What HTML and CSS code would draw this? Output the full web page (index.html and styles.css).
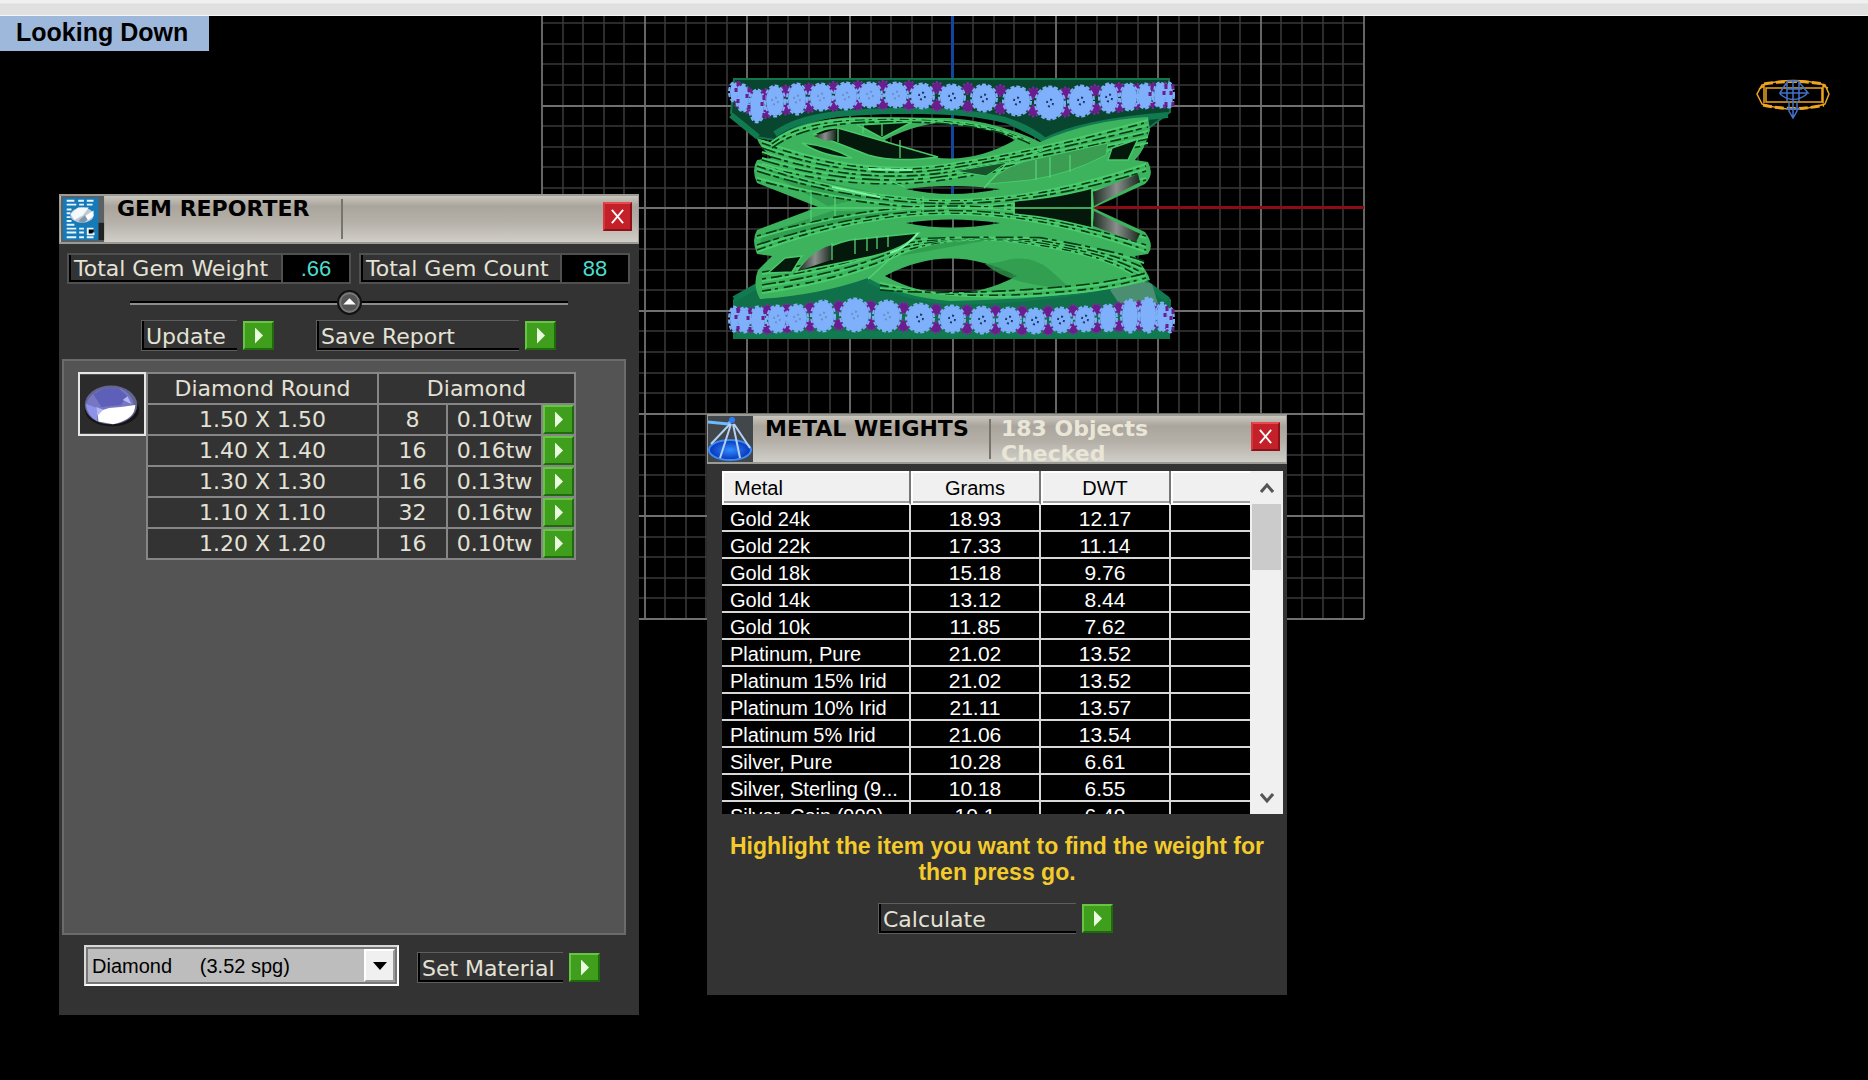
FILE: index.html
```html
<!DOCTYPE html>
<html lang="en">
<head>
<meta charset="utf-8">
<title>Looking Down</title>
<link rel="stylesheet" href="styles.css">
</head>
<body>
<svg class="scene" id="scene" aria-hidden="true">
  <g id="grid"></g>
  <g id="ring">
    <g fill="#08462f" stroke="#14764f" stroke-width="2">
      <path d="M734 79H1169L1170 112L1150 127L1045 141L1000 119Q950 110 850 114Q800 120 775 140L756 137L731 113Z"/>
      <path d="M734 338H1169L1170 300L1140 276Q1060 300 950 303Q900 292 866 276Q820 296 756 288L734 300Z" fill="#0f704a"/>
    </g>
    <path fill="none" stroke="#117a50" stroke-width="6" d="M731 115L758 137M775 134Q800 116 850 113Q950 106 1005 120Q1030 128 1045 141Q1080 122 1168 115M734 299L757 286M868 280Q910 300 960 302Q1060 300 1140 279L1168 300M736 334H1168"/>
    <path fill="#4a8f72" d="M1110 290L1130 277L1152 284L1158 304L1120 305Z"/>
    <path id="metal" fill="#3db35d" fill-rule="evenodd" d="M770 142Q800 118 860 117L950 118Q1000 122 1040 142Q1090 120 1148 117L1150 130Q1145 150 1135 160L1148 162Q1155 175 1145 184L1093 208L1145 232Q1155 245 1148 254L1135 256Q1148 272 1150 280Q1080 299 950 301Q900 297 868 278Q820 295 760 299Q752 285 758 270L772 256L757 254Q751 240 757 230L818 207L757 183Q751 170 757 160L772 158Q758 145 757 138Z
      M885 140Q950 105 1015 140Q950 177 885 140Z M906 189Q950 183 1000 189Q950 199 906 189Z M906 223Q950 216 1000 223Q950 232 906 223Z M885 276Q950 241 1017 276Q950 311 885 276Z"/>
    <g fill="#2f9a4e" opacity=".8">
      <path d="M760 168L880 194L828 206Z"/>
      <path d="M760 244L762 234L832 211L900 212Q820 226 760 244Z"/>
      <path d="M1000 262Q1030 252 1050 270L1070 288Q1010 286 985 264Z"/>
      <path d="M915 246Q930 234 1000 238L900 256Z"/>
    </g>
    <g id="contours" fill="none"></g>
    <g fill="#04180c" stroke="#48c96a" stroke-width="1.5">
      <path d="M814 134Q826 127 838 128L938 157Q895 163 868 155Z"/>
      <path d="M858 125L912 122L882 138Z"/>
      <path d="M1014 201Q1060 197 1092 188V228Q1050 217 1014 214Z"/>
      <path d="M796 272Q814 248 850 240L918 233Q905 250 864 258Z"/>
      <path d="M802 143Q830 146 852 158Q824 157 802 143Z"/>
      <path d="M1112 148L1138 139L1128 160L1108 160Z"/>
      <path d="M768 273L785 258L802 256L792 272Z"/>
    </g>
    <path fill="#3a9d52" stroke="#48c96a" d="M988 184Q1004 164 1040 158L1108 143L1106 155Q1070 174 1030 180Z"/>
    <path fill="#17532b" stroke="#48c96a" d="M955 171L1008 162L986 176Z"/>
    <g fill="url(#steel)">
      <path d="M814 136L836 129V140L826 141Z"/>
      <path d="M798 271Q812 250 832 245L831 260Z"/>
      <path d="M1093 192L1138 174L1140 182L1094 206Z"/>
      <path d="M1094 211L1140 234L1136 242L1093 226Z"/>
    </g>
    <path d="M890 181L905 187M984 188L1006 164L1050 148M868 279L920 232M1014 203V214M1014 208H1093M1092 190V226M810 208H1090M838 128V142M882 124V136M863 124V133M900 140V158M832 243V260M855 238V254M867 237V251M877 236V249M888 235V247M1050 157V178M1070 155V172M1036 160V180M811 190V222M835 196V216M923 196V214" fill="none" stroke="#55d276" stroke-width="1.3"/>
    <path d="M868 169L912 170M832 187L880 197M890 253Q906 248 918 233" fill="none" stroke="#7df5a5" stroke-width="2"/>
    <g id="gems"></g>
  </g>
  <g class="mini" fill="none" stroke-width="1.5" id="mini">
    <path stroke="#efa51f" d="M1762 85Q1793 76 1825 85L1829 94L1825 104Q1793 114 1762 104L1757 94ZM1766 88H1822V102H1766ZM1759 89L1764 86V103M1828 88L1823 86V103"/>
    <path stroke="#efa51f" stroke-width="3" stroke-dasharray="9 3" d="M1764 84Q1793 79 1824 84M1763 105Q1793 112 1824 105"/>
    <path stroke="#4372c8" d="M1783 88L1788 81H1798L1804 88L1808 93H1780ZM1780 94Q1793 105 1807 94M1787 82V101M1793 80V118M1799 82V101M1786 89H1802M1789 101V111L1793 118L1797 111V101M1786 109H1800"/>
  </g>
  <defs>
    <linearGradient id="steel"><stop offset="0" stop-color="#1c2a20"/><stop offset=".5" stop-color="#8a8f8b"/><stop offset="1" stop-color="#1a281f"/></linearGradient>
  </defs>
</svg>

<header class="toolbar"></header>
<h1 class="view-name">Looking Down</h1>

<section class="window gem" aria-label="Gem Reporter">
  <div class="titlebar">
    <svg class="app-icon" viewBox="0 0 45 48" aria-hidden="true">
      <rect width="45" height="48" fill="#5a6063"/><path d="M39 28h6v18h-6z" fill="#222"/>
      <rect x="2" y="2" width="37" height="44" fill="#167ab8"/>
      <path stroke="#eaf6ff" stroke-width="2" d="M6 5h8M18 5h6M27 5h7M6 9h10M19 9h5M27 9h6M6 14h5M6 18h4M6 22h4M6 26h5M6 30h8M6 34h10M19 34h5M34 34h-6v6h6v-2M6 38h10M19 38h5M6 43h10M19 43h5M27 43h7"/>
      <ellipse cx="22" cy="20" rx="12" ry="8" fill="#bccbd6"/><path d="M10 19l8-7 11 0-6 8-9 5z" fill="#f6f9fb"/><path d="M24 22l10-7v6l-7 5z" fill="#fff"/><path d="M18 26l7-6 3 5-5 3z" fill="#7f98aa"/>
    </svg>
    <h2 class="title">GEM REPORTER</h2>
    <p class="status"></p>
    <button class="close" aria-label="Close"><svg viewBox="0 0 16 16"><path d="M2 1L14 15M14 1L2 15"/></svg></button>
  </div>
  <div class="totals">
    <div class="total weight"><span class="total-name">Total Gem Weight</span><output>.66</output></div>
    <div class="total count"><span class="total-name">Total Gem Count</span><output>88</output></div>
  </div>
  <div class="divider"><button class="knob" aria-label="Collapse"><svg viewBox="0 0 24 24"><circle cx="12" cy="12" r="11" fill="#777" stroke="#111" stroke-width="2"/><circle cx="12" cy="12" r="8" fill="#555"/><path d="M6 14L12 8L18 14Z" fill="#fff"/></svg></button></div>
  <div class="actions">
    <div class="action update"><label for="update">Update</label><button class="go" id="update"></button></div>
    <div class="action save"><label for="save">Save Report</label><button class="go" id="save"></button></div>
  </div>
  <div class="report">
    <svg class="thumb" viewBox="0 0 66 60" aria-label="Round gem">
      <rect width="66" height="60" fill="#2b2b2b"/>
      <ellipse cx="33" cy="36" rx="28" ry="17" fill="#151515"/>
      <ellipse cx="32" cy="31" rx="27" ry="20" fill="#65668f"/>
      <path d="M6 32Q8 20 24 14H42Q54 20 56 32L44 40H12Z" fill="#7577c4"/>
      <path d="M14 20L24 14H40L49 22L42 31L22 33Z" fill="#5d5fb8"/><path d="M6 30L18 34V48Q7 42 6 30Z" fill="#8e92ea"/>
      <path d="M18 38L30 34L42 33L57 31Q57 46 34 51L19 48Z" fill="#fff"/><path d="M17 33l7 3-6 6zM44 26l5-4 4 8z" fill="#b4b6f5"/>
    </svg>
    <table class="stones">
      <colgroup><col class="c-size"><col class="c-qty"><col class="c-wt"><col class="c-go"></colgroup>
      <thead><tr><th>Diamond Round</th><th colspan="3">Diamond</th></tr></thead>
      <tbody>
        <tr><td>1.50 X 1.50</td><td>8</td><td>0.10tw</td><td class="cell-go"><button class="go" aria-label="Select 1.50"></button></td></tr>
        <tr><td>1.40 X 1.40</td><td>16</td><td>0.16tw</td><td class="cell-go"><button class="go" aria-label="Select 1.40"></button></td></tr>
        <tr><td>1.30 X 1.30</td><td>16</td><td>0.13tw</td><td class="cell-go"><button class="go" aria-label="Select 1.30"></button></td></tr>
        <tr><td>1.10 X 1.10</td><td>32</td><td>0.16tw</td><td class="cell-go"><button class="go" aria-label="Select 1.10"></button></td></tr>
        <tr><td>1.20 X 1.20</td><td>16</td><td>0.10tw</td><td class="cell-go"><button class="go" aria-label="Select 1.20"></button></td></tr>
      </tbody>
    </table>
  </div>
  <div class="material">
    <div class="combo">
      <select aria-label="Material"><option>Diamond&nbsp;&nbsp;&nbsp;&nbsp; (3.52 spg)</option></select>
      <span class="drop"><svg viewBox="0 0 14 8"><path d="M0 0H14L7 8Z"/></svg></span>
    </div>
    <div class="action"><label for="set">Set Material</label><button class="go" id="set"></button></div>
  </div>
</section>

<section class="window metal" aria-label="Metal Weights">
  <div class="titlebar">
    <svg class="app-icon" viewBox="0 0 45 46" aria-hidden="true">
      <defs><radialGradient id="pan"><stop offset="0" stop-color="#2f8dff"/><stop offset="1" stop-color="#0a34b8"/></radialGradient></defs>
      <rect width="45" height="46" fill="#42474b"/>
      <ellipse cx="22" cy="34" rx="21" ry="10" fill="url(#pan)" stroke="#3a8cf5" stroke-width="2"/>
      <path d="M0 6L20 8L26 3" stroke="#6cbcff" stroke-width="3" fill="none"/><circle cx="24" cy="4" r="3" fill="#2c7bff"/>
      <path d="M22 8L3 28M23 8L12 42M25 8L32 42M26 8L42 32" stroke="#b4d2f6" stroke-width="2" fill="none"/>
    </svg>
    <h2 class="title">METAL WEIGHTS</h2>
    <p class="status">183 Objects Checked</p>
    <button class="close" aria-label="Close"><svg viewBox="0 0 16 16"><path d="M2 1L14 15M14 1L2 15"/></svg></button>
  </div>
  <div class="list">
    <table class="metals">
      <colgroup><col class="m-name"><col class="m-num"><col class="m-num"><col></colgroup>
      <thead><tr><th>Metal</th><th>Grams</th><th>DWT</th><th></th></tr></thead>
      <tbody>
        <tr><td>Gold 24k</td><td>18.93</td><td>12.17</td><td></td></tr>
        <tr><td>Gold 22k</td><td>17.33</td><td>11.14</td><td></td></tr>
        <tr><td>Gold 18k</td><td>15.18</td><td>9.76</td><td></td></tr>
        <tr><td>Gold 14k</td><td>13.12</td><td>8.44</td><td></td></tr>
        <tr><td>Gold 10k</td><td>11.85</td><td>7.62</td><td></td></tr>
        <tr><td>Platinum, Pure</td><td>21.02</td><td>13.52</td><td></td></tr>
        <tr><td>Platinum 15% Irid</td><td>21.02</td><td>13.52</td><td></td></tr>
        <tr><td>Platinum 10% Irid</td><td>21.11</td><td>13.57</td><td></td></tr>
        <tr><td>Platinum 5% Irid</td><td>21.06</td><td>13.54</td><td></td></tr>
        <tr><td>Silver, Pure</td><td>10.28</td><td>6.61</td><td></td></tr>
        <tr><td>Silver, Sterling (9...</td><td>10.18</td><td>6.55</td><td></td></tr>
        <tr><td>Silver, Coin (900)</td><td>10.1</td><td>6.49</td><td></td></tr>
      </tbody>
    </table>
    <div class="scrollbar">
      <button aria-label="Scroll up"><svg viewBox="0 0 14 12"><path d="M1 10L7 3L13 10"/></svg></button>
      <div class="thumb-bar"></div>
      <button aria-label="Scroll down"><svg viewBox="0 0 14 12"><path d="M1 2L7 9L13 2"/></svg></button>
    </div>
  </div>
  <p class="hint">Highlight the item you want to find the weight for then press go.</p>
  <div class="action calculate"><label for="calc">Calculate</label><button class="go" id="calc"></button></div>
</section>
<script src="scene.js"></script>
</body>
</html>
```
FILE: styles.css
```css
* { box-sizing: border-box; }
body {
  margin: 0;
  min-height: 100vh;
  position: relative;
  overflow: hidden;
  background: #000;
  font: 22px/26px "DejaVu Sans", sans-serif;
  color: #e4e2d6;
}
h1, h2, p { margin: 0; }
button { padding: 0; border: 0; background: none; display: block; }
button svg { display: block; }

.scene { position: absolute; inset: 0; width: 100%; height: 100%; }
.toolbar {
  position: relative;
  height: 16px;
  background: linear-gradient(#f0f0f0 3px, #e0e0e0 4px);
  border-bottom: 1px solid #f4f4f4;
}
.view-name {
  position: relative;
  width: 209px;
  height: 35px;
  padding-left: 16px;
  background: #9db8da;
  color: #000;
  font: bold 25px/32px "Liberation Sans", sans-serif;
}

/* floating tool windows */
.window { position: absolute; width: 580px; background: #333; }
.window.gem { left: 59px; top: 194px; padding-bottom: 29px; }
.window.metal { left: 707px; top: 414px; padding-bottom: 61px; }

.titlebar {
  display: flex;
  height: 50px;
  border: 2px solid #9c9a94;
  border-width: 2px 1px;
  background: linear-gradient(#c9c6be, #aaa59c 22%, #b4b0a8 55%, #d0cec8);
}
.app-icon { width: 45px; height: 46px; flex: none; }
.title {
  width: 238px;
  margin: 3px 0;
  padding-left: 12px;
  border-right: 2px solid #77746e;
  font-size: 22px;
  line-height: 20px;
  color: #000;
}
.status {
  flex: 1;
  margin-left: 10px;
  font-weight: bold;
  line-height: 25px;
  color: #e9e6d8;
}
.metal .status { padding-right: 60px; margin-bottom: -4px; }
.close {
  width: 29px;
  height: 29px;
  margin: 6px 6px 0 0;
  border: 2px solid;
  border-color: #e8494f #8e1018 #8e1018 #d8353c;
  background: #c3202a;
}
.close svg { width: 15px; height: 17px; margin: 0 auto; stroke: #fff; stroke-width: 2; }

/* labelled action with a green go button */
.action { display: flex; gap: 6px; }
.action label {
  flex: 1;
  height: 31px;
  padding-left: 4px;
  border: 1px solid #5e5e5e;
  border-right: 0;
  box-shadow: inset 2px -2px #000;
  line-height: 32px;
  white-space: nowrap;
}
.go {
  width: 31px;
  height: 29px;
  flex: none;
  margin-top: 1px;
  border: 2px solid;
  border-color: #66c542 #1f6a0c #1f6a0c #66c542;
  background: #3f9f1d;
}
.go::before {
  content: "";
  display: block;
  margin-left: 10px;
  width: 8px;
  height: 16px;
  background: #eafbe0;
  clip-path: polygon(0 0, 100% 50%, 0 100%);
}

.totals { display: flex; gap: 8px; padding: 9px 8px 0; }
.total { display: flex; height: 31px; border: 2px solid #505050; }
.total-name {
  flex: 1;
  padding-left: 5px;
  box-shadow: inset 2px -2px #000;
  line-height: 27px;
  white-space: nowrap;
}
.total output {
  width: 68px;
  border-left: 2px solid #505050;
  background: #000;
  color: #4edccb;
  text-align: center;
  font: 22px/28px "Liberation Sans", sans-serif;
}
.weight { width: 284px; }
.count { width: 271px; }

.divider {
  display: flex;
  justify-content: center;
  align-items: center;
  height: 24px;
  margin: 6px 71px 0;
  background: linear-gradient(#0000 11px, #000 11px 13px, #8c8c8c 13px 15px, #0000 15px);
}
.knob { width: 25px; height: 25px; }
.actions { display: flex; gap: 42px; margin: 6px 0 0 82px; }
.update { width: 133px; }
.save { width: 240px; }

.report {
  display: flex;
  align-items: flex-start;
  height: 576px;
  margin: 8px 13px 0 3px;
  padding: 11px 14px;
  border: 2px solid #6b6b6b;
  background: #545454;
}
.thumb { width: 68px; height: 64px; flex: none; border: 2px solid #e6e6e6; }
.stones { border-collapse: collapse; table-layout: fixed; width: 428px; }
.stones th, .stones td {
  height: 31px;
  padding: 0;
  border: 2px solid #868686;
  background: #333;
  font-weight: normal;
  line-height: 26px;
  text-align: center;
}
.c-size { width: 231px; }
.c-qty { width: 69px; }
.c-wt { width: 95px; }
.c-go { width: 33px; }
.cell-go .go { width: 100%; margin: 0; }

.material { display: flex; align-items: center; gap: 18px; padding: 10px 38px 0 25px; }
.material .action { width: 183px; margin-top: 4px; }
.combo {
  display: flex;
  flex: none;
  width: 315px;
  height: 41px;
  padding: 2px;
  border: 2px solid;
  border-color: #d8d8d8 #fff #fff #d8d8d8;
  background: #777;
}
.combo select {
  flex: 1;
  padding: 0 0 0 4px;
  border: 0;
  border-radius: 0;
  appearance: none;
  background: #bdbdbd;
  color: #000;
  font: 20px/30px "Liberation Sans", sans-serif;
}
.drop {
  display: grid;
  place-items: center;
  width: 31px;
  border: 2px solid;
  border-color: #fff #999 #999 #fff;
  background: #f0f0f0;
}
.drop svg { width: 14px; height: 8px; }

.list {
  display: flex;
  align-items: flex-start;
  height: 343px;
  margin: 7px 4px 0 15px;
  overflow: hidden;
  background: #000;
}
.metals {
  flex: 1;
  border-collapse: separate;
  border-spacing: 0;
  table-layout: fixed;
  color: #fff;
  font: 20px/22px "Liberation Sans", sans-serif;
}
.m-name { width: 189px; }
.m-num { width: 130px; }
.metals th {
  height: 34px;
  padding: 2px 0 0;
  border-bottom: 2px solid #fff;
  border-right: 2px solid #777;
  box-shadow: inset 2px 2px #fff, inset 0 -2px #a0a0a0;
  background: #f0f0f0;
  color: #000;
  font-weight: normal;
}
.metals th:first-child { padding-left: 12px; text-align: left; }
.metals td {
  height: 27px;
  padding: 3px 0 0;
  border-bottom: 2px solid #d8d8d8;
  border-right: 2px solid #d8d8d8;
  font-size: 21px;
  text-align: center;
  white-space: nowrap;
}
.metals td:first-child { padding-left: 8px; font-size: 20px; text-align: left; }
.metals th:last-child, .metals td:last-child { border-right: 0; }
.scrollbar {
  display: flex;
  flex-direction: column;
  width: 33px;
  height: 100%;
  background: #f0f0f0;
}
.scrollbar button { height: 33px; }
.scrollbar svg { width: 14px; height: 12px; margin: 0 auto; fill: none; stroke: #555; stroke-width: 3; }
.thumb-bar { height: 66px; margin: 0 2px auto; background: #cbcbcb; }

.hint {
  padding: 19px 20px 0;
  color: #f3cb2c;
  text-align: center;
  font: bold 23px/26px "Liberation Sans", sans-serif;
}
.calculate { width: 235px; margin: 18px 0 0 171px; }
```
FILE: scene.js
```js
const NS = "http://www.w3.org/2000/svg";
function add(parent, tag, attrs) {
  const el = document.createElementNS(NS, tag);
  for (const k in attrs) el.setAttribute(k, attrs[k]);
  parent.appendChild(el);
  return el;
}

// Construction grid: 8 major cells wide, 5 minor cells in each
const grid = document.getElementById("grid");
const left = 542, right = 1364, top0 = 16, bottom = 619, step = 102.7 / 5;
function lines(major) {
  let d = "";
  for (let i = 0; i <= 40; i++) if ((i % 5 === 0) === major) d += `M${Math.round(left + i * step)} ${top0}V${bottom}`;
  for (let j = 0; j <= 30; j++) {
    const y = Math.round(bottom - j * step);
    if (y > top0 && (j % 5 === 0) === major) d += `M${left} ${y}H${right}`;
  }
  return d;
}
add(grid, "path", { d: lines(false), stroke: "#383838", "stroke-width": 1.6, fill: "none" });
add(grid, "path", { d: lines(true), stroke: "#707070", "stroke-width": 1.8, fill: "none" });
add(grid, "path", { d: "M952.5 16V208", stroke: "#12469c", "stroke-width": 3 });
add(grid, "path", { d: "M1092 207.5H1364", stroke: "#8a0c14", "stroke-width": 3 });

// Wire contours on the interlaced bands
const contours = document.getElementById("contours");
const bands = [
  [o => `M762 ${141 + o}Q860 ${178 + o * .6} 950 ${164 + o * .6}T1148 ${120 + o}`, [0, 5, 11, 17, 23]],
  [o => `M757 ${164 + o}Q860 ${200 + o * .5} 950 ${200 + o * .5}T1146 ${164 + o}`, [0, 5, 14]],
  [o => `M757 ${252 - o}Q860 ${214 - o * .5} 950 ${214 - o * .5}T1146 ${252 - o}`, [0, 5, 14]],
  [o => `M762 ${293 - o}Q850 ${280 - o} 900 ${254 - o * .7}Q960 ${230 + o * .3} 1040 ${246 - o * .4}Q1110 ${256 - o * .3} 1144 ${282 - o}`, [0, 6, 12, 19]],
  [o => `M772 ${142 + o}Q800 ${120 + o} 860 ${119 + o * .6}Q980 ${115 + o * .5} 1030 ${142 + o * .3}`, [0, 4]],
  [o => `M880 ${283 + o}Q960 ${303 - o} 1060 ${294 - o}Q1110 ${290 - o} 1146 ${280 - o}`, [0, 5]]
];
const dashes = ["9 4 3 6", "14 3 6 5", "4 5 11 3", "18 4 5 7"];
bands.forEach(([curve, offsets]) => offsets.forEach((o, i) => {
  add(contours, "path", { d: curve(o), stroke: "#4ccd6d", "stroke-width": 2 });
  add(contours, "path", { d: curve(o + 2), stroke: "#063a18", "stroke-width": 1.6, "stroke-dasharray": dashes[i % 4] });
}));

// Gem rows: [centre x, centre y, half width, half height]
const rows = [
  [[734, 92, 6, 10], [743, 98, 8, 14], [757, 106, 9, 17], [775, 101, 11, 16], [797, 99, 11, 16], [821, 97, 13, 14], [846, 96, 13, 14], [870, 95, 13, 13], [896, 95, 13, 13], [922, 96, 13, 13], [952, 97, 14, 13], [984, 98, 14, 14], [1017, 101, 15, 15], [1050, 103, 16, 17], [1081, 101, 14, 16], [1109, 98, 11, 15], [1129, 97, 10, 14], [1145, 96, 9, 13], [1160, 95, 8, 13], [1169, 95, 6, 13]],
  [[734, 319, 6, 13], [744, 320, 8, 13], [758, 320, 9, 14], [777, 319, 11, 14], [797, 318, 12, 14], [823, 316, 13, 16], [855, 315, 16, 17], [887, 316, 15, 16], [920, 318, 15, 15], [952, 319, 14, 14], [982, 320, 13, 14], [1009, 320, 13, 13], [1035, 321, 12, 13], [1061, 320, 12, 13], [1085, 319, 12, 13], [1108, 318, 10, 14], [1130, 316, 10, 17], [1148, 315, 10, 18], [1162, 317, 7, 15], [1170, 320, 5, 13]]
];
const gems = document.getElementById("gems");
rows.forEach(row => {
  row.slice(1).forEach((g, i) => {
    const x = (g[0] + row[i][0]) / 2, y = (g[1] + row[i][1]) / 2;
    const r = g[2] < 10 ? 3 : 5;
    [-9, 9].forEach(o => {
      add(gems, "circle", { cx: x, cy: y + o, r, fill: "#6a1d8c" });
      add(gems, "circle", { cx: x, cy: y + o, r: r + .5, fill: "none", stroke: "#7c2aa0", "stroke-width": 2, "stroke-dasharray": "2 2" });
    });
  });
  row.forEach(([x, y, rx, ry]) => {
    add(gems, "ellipse", { cx: x, cy: y, rx: rx - 2, ry: ry - 1, fill: "#7fb0fb" });
    add(gems, "ellipse", { cx: x, cy: y, rx: rx - 1, ry: ry - .5, fill: "none", stroke: "#7fb0fb", "stroke-width": 2, "stroke-dasharray": "4 2" });
    if (rx > 10) add(gems, "ellipse", { cx: x, cy: y, rx: 3, ry: 3.5, fill: "none", stroke: x > 915 ? "#1c3560" : "#6b8fc4", "stroke-width": 1.8, "stroke-dasharray": "2 3" });
  });
  row.forEach(([x, y, rx]) => {
    if (rx < 10) add(gems, "path", { d: `M${x + rx - 2} ${y - 11}v5m-2 2v4M${x + rx - 2} ${y + 11}v-4`, fill: "none", stroke: "#6a1d8c", "stroke-width": 3 });
  });
});
```
